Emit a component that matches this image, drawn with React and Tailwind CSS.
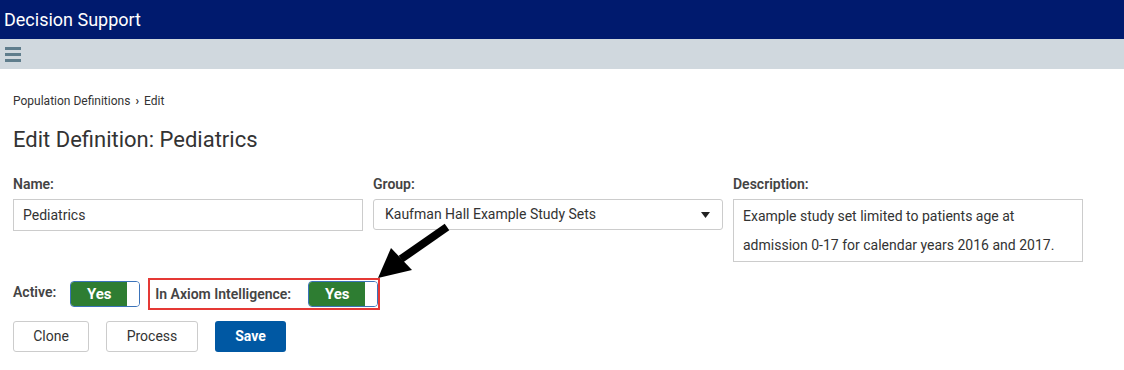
import React from "react";

function Toggle() {
  return (
    <div className="flex h-[26px] w-[70px] rounded-[4px] border border-[#3b73b9] bg-white overflow-hidden">
      <div className="flex flex-1 items-center justify-center bg-[#2e7d32] text-[15px] font-bold text-white">Yes</div>
      <div className="w-[12px] bg-white"></div>
    </div>
  );
}

export default function App() {
  return (
    <div className="relative min-h-[370px] w-[1124px] bg-white text-[#333]" style={{ fontFamily: "Roboto, 'Liberation Sans', sans-serif" }}>
      <div className="flex h-[39px] items-center bg-[#001a6e] pl-[4px] text-[18px] text-white">Decision Support</div>
      <div className="flex h-[30px] items-center bg-[#d0d8de] pl-[5px]">
        <div className="flex flex-col gap-[3px]">
          <div className="h-[3px] w-[16px] bg-[#5f7d8c]"></div>
          <div className="h-[3px] w-[16px] bg-[#5f7d8c]"></div>
          <div className="h-[3px] w-[16px] bg-[#5f7d8c]"></div>
        </div>
      </div>
      <div className="px-[13px]">
        <div className="mt-[24px] flex h-[16px] items-center text-[12px] text-[#333]">
          <span>Population Definitions</span>
          <span className="mx-[5px] text-[12px] font-bold">›</span>
          <span>Edit</span>
        </div>
        <h1 className="mt-[17px] text-[22px] leading-[28px] text-[#333]">Edit Definition: Pediatrics</h1>
        <div className="mt-[21px] flex gap-[10px]">
          <div className="w-[350px]">
            <div className="text-[14px] font-semibold leading-[18px] text-[#444]">Name:</div>
            <div className="mt-[6px] flex h-[32px] items-center border border-[#ccc] px-[9px] text-[14px]">Pediatrics</div>
          </div>
          <div className="w-[350px]">
            <div className="text-[14px] font-semibold leading-[18px] text-[#444]">Group:</div>
            <div className="mt-[6px] flex h-[31px] items-center justify-between rounded-[3px] border border-[#ccc] pl-[11px] pr-[12px] text-[14px]">
              <span>Kaufman Hall Example Study Sets</span>
              <svg width="9" height="6" viewBox="0 0 9 6"><path d="M0 0 L9 0 L4.5 6 Z" fill="#222" /></svg>
            </div>
          </div>
          <div className="w-[350px]">
            <div className="text-[14px] font-semibold leading-[18px] text-[#444]">Description:</div>
            <div className="mt-[6px] h-[63px] border border-[#ccc] px-[9px] pt-[2px] text-[14px] leading-[29px]">
              Example study set limited to patients age at admission 0-17 for calendar years 2016 and 2017.
            </div>
          </div>
        </div>
        <div className="mt-[16px] flex items-start">
          <div className="mr-[14px] pt-[4px] text-[14px] font-semibold text-[#444]">Active:</div>
          <div className="mt-[3px]"><Toggle /></div>
          <div className="ml-[8px] flex h-[32px] w-[232px] items-center border-2 border-[#e53935] pl-[5px] pr-0">
            <span className="flex-1 text-[14px] font-semibold text-[#444]">In Axiom Intelligence:</span>
            <Toggle />
          </div>
        </div>
        <div className="mt-[11px] flex gap-[17px]">
          <button className="h-[31px] w-[76px] rounded-[3px] border border-[#ccc] bg-white text-[14px] text-[#333]">Clone</button>
          <button className="h-[31px] w-[92px] rounded-[3px] border border-[#ccc] bg-white text-[14px] text-[#333]">Process</button>
          <button className="h-[31px] w-[71px] rounded-[3px] bg-[#0058a3] text-[14px] font-bold text-white">Save</button>
        </div>
      </div>
      <svg className="absolute left-0 top-0 pointer-events-none" width="1124" height="370">
        <line x1="447" y1="227" x2="401" y2="259" stroke="#000" strokeWidth="8" />
        <polygon points="378,278 391,248 412,270" fill="#000" />
      </svg>
    </div>
  );
}
